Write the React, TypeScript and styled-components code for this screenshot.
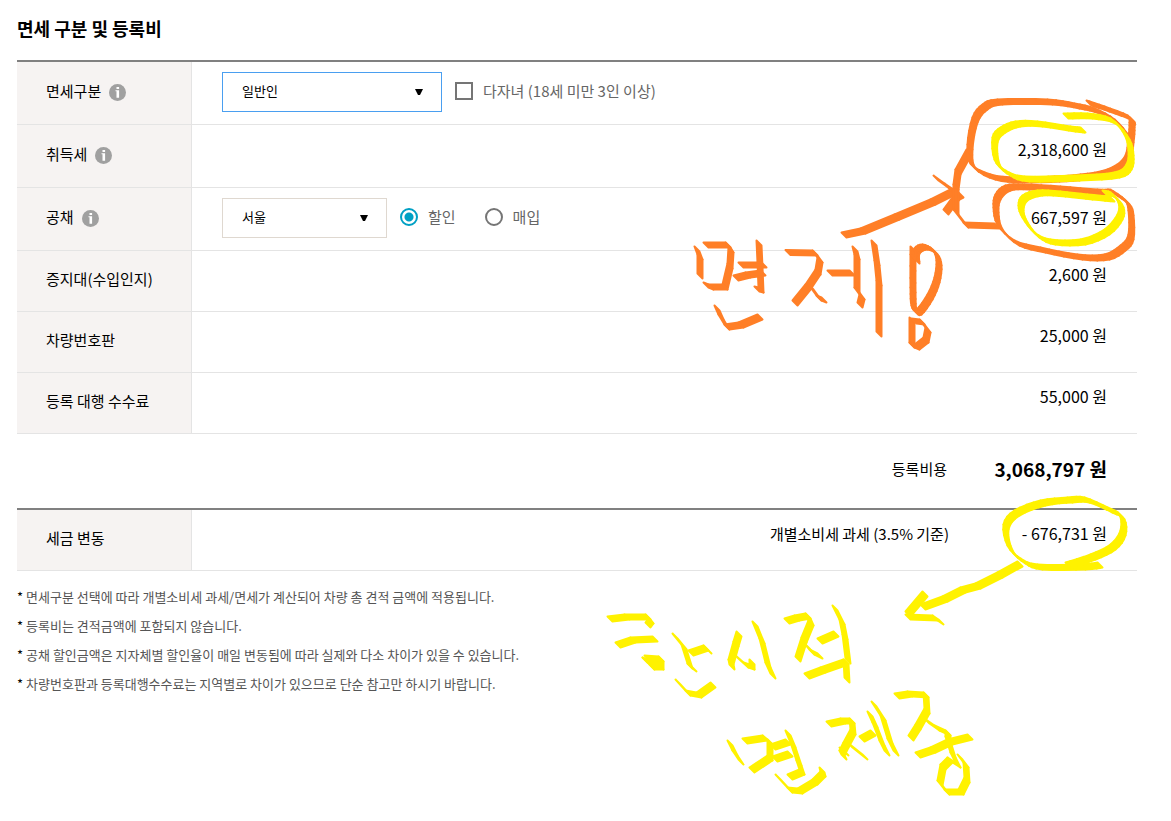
import React from 'react';
import styled, { createGlobalStyle } from 'styled-components';

const GlobalStyle = createGlobalStyle`
  *, *::before, *::after { box-sizing: border-box; }
  body {
    margin: 0;
    background: #fff;
    color: #000;
    font-family: 'Noto Sans CJK KR', 'Noto Sans', sans-serif;
    font-size: 15px;
    line-height: 24px;
  }
`;

const Page = styled.main`
  position: relative;
  min-height: 820px;
  padding: 16px 34px 16px 17px;
`;

const Title = styled.h1`
  margin: 0 0 20px;
  font-size: 18px;
  line-height: 24px;
  font-weight: 700;
`;

const Table = styled.table`
  width: 100%;
  border-spacing: 0;
  border-top: 2px solid #808080;
`;

const HeadCell = styled.th`
  width: 175px;
  padding: 0 0 4px 29px;
  background: #f6f3f2;
  border-right: 1px solid #e4e4e4;
  border-bottom: 1px solid #e4e4e4;
  font-weight: 400;
  text-align: left;
  white-space: nowrap;
`;

const Cell = styled.td<{ $height: number; $raised?: boolean }>`
  height: ${(p) => p.$height}px;
  padding: 0 30px ${(p) => (p.$raised ? 12 : 2)}px;
  border-bottom: 1px solid #e4e4e4;
`;

const HeadLabel = styled.span`
  display: flex;
  align-items: center;
  gap: 8px;
`;

const InfoButton = styled.button`
  display: flex;
  padding: 2px 0 0;
  border: 0;
  background: none;
  cursor: pointer;
`;

const Controls = styled.div`
  display: flex;
  align-items: center;
`;

const SelectBox = styled.span<{ $width: number }>`
  position: relative;
  width: ${(p) => p.$width}px;
  margin-right: 13px;
`;

const Select = styled.select<{ $active?: boolean }>`
  display: block;
  width: 100%;
  height: 40px;
  padding: 0 30px 2px 19px;
  border: 1px solid ${(p) => (p.$active ? '#4a9ff0' : '#dfd8d0')};
  border-radius: 0;
  background: #fff;
  color: #000;
  font: inherit;
  font-size: 13px;
  appearance: none;
  outline: none;
`;

const Arrow = styled.svg`
  position: absolute;
  top: 17px;
  right: 19px;
  pointer-events: none;
`;

const Choice = styled.label`
  display: flex;
  align-items: center;
  gap: 10px;
  margin-right: 29px;
  padding-bottom: 2px;
  color: #666;
`;

const Check = styled.input`
  width: 18px;
  height: 18px;
  margin: 0;
  border: 2px solid #757575;
  background: #fff;
  appearance: none;
`;

const Radio = styled(Check)`
  border-radius: 50%;
  &:checked {
    border-color: #00a0c4;
    background: radial-gradient(circle, #00a0c4 4px, #fff 5px);
  }
`;

const Amount = styled.span`
  min-width: 158px;
  margin-left: auto;
  padding-bottom: 2px;
  font-size: 16px;
  text-align: right;
`;

const AmountLine = styled.div`
  display: flex;
  align-items: center;
  justify-content: flex-end;
`;

const SideAmount = styled(Amount)`
  margin-left: 0;
`;

const Summary = styled(AmountLine)`
  height: 74px;
  padding: 0 30px 4px;
`;

const Total = styled.strong`
  min-width: 160px;
  font-size: 19px;
  font-weight: 700;
  text-align: right;
`;

const Notes = styled.ul`
  margin: 11px 0 0;
  padding: 0;
  list-style: none;
`;

const Note = styled.li`
  display: flex;
  gap: 3px;
  color: #555;
  font-size: 13px;
  line-height: 29px;

  &::before {
    content: '*';
    color: #000;
  }
`;

const Ink = styled.svg`
  position: absolute;
  top: 0;
  left: 0;
  pointer-events: none;
`;

const Info = ({ about }: { about: string }) => (
  <InfoButton type="button" aria-label={`${about} 안내`}>
    <svg width="17" height="17" viewBox="0 0 17 17" aria-hidden="true">
      <circle cx="8.5" cy="8.5" r="8.5" fill="#a0a0a0" />
      <rect x="7.5" y="3" width="2.6" height="2" fill="#fff" />
      <path d="M6.5 6.2h3.6v7.6H7.5V7.2h-1z" fill="#fff" />
    </svg>
  </InfoButton>
);

const DropDown = ({ label, value, width, active }: { label: string; value: string; width: number; active?: boolean }) => (
  <SelectBox $width={width}>
    <Select aria-label={label} $active={active} defaultValue={value}>
      <option>{value}</option>
    </Select>
    <Arrow width="8" height="6" viewBox="0 0 8 6" aria-hidden="true">
      <path d="M0 0h8L5 6H3z" />
    </Arrow>
  </SelectBox>
);

type Row = { name: string; info?: boolean; height: number; amount: string };
const fees: Row[] = [
  { name: '증지대(수입인지)', height: 61, amount: '2,600 원' },
  { name: '차량번호판', height: 61, amount: '25,000 원' },
  { name: '등록 대행 수수료', height: 61, amount: '55,000 원' },
];

const FeeRow = ({ name, info, height, amount }: Row) => (
  <tr>
    <HeadCell scope="row">
      <HeadLabel>
        {name}
        {info && <Info about={name} />}
      </HeadLabel>
    </HeadCell>
    <Cell $height={height} $raised>
      <AmountLine>
        <Amount>{amount}</Amount>
      </AmountLine>
    </Cell>
  </tr>
);

const notes = [
  '면세구분 선택에 따라 개별소비세 과세/면세가 계산되어 차량 총 견적 금액에 적용됩니다.',
  '등록비는 견적금액에 포함되지 않습니다.',
  '공채 할인금액은 지자체별 할인율이 매일 변동됨에 따라 실제와 다소 차이가 있을 수 있습니다.',
  '차량번호판과 등록대행수수료는 지역별로 차이가 있으므로 단순 참고만 하시기 바랍니다.',
];

// Freehand marks: each string is the centre line of one pen stroke.
const orangeMarks = [
  '697,249 700,257 700,276',
  '706,245 728,245 731,250 730,266 725,287 711,287 706,285',
  '759,243 760,265 761,290 757,289',
  '741,265 764,265',
  '736,278 748,275 763,273',
  '717,308 721,317 727,327 741,325 760,317',
  '788,252.5 815,253 820,260 818,272 808,287 795,303',
  '811,287 819,298 824,300',
  '830,273 852,273',
  '855,249 857,257 857,290 862,297 860,305',
  '874,243 877,263 879,283 879,334',
  '917,261 917,251 925,247 935,252 939,263 937,280 930,297 919,312 914,308 913,290 913,249',
  '912,320 912,345 917,347 926,340 928,330 922,322 914,321',
  '844,235 863,231 897,217 933,202 953,192',
  '936,178 947,186 956,192',
  '946,212 957,197 961,195',
  '969,152 958,172 956,187 956,212 966,225 997,226',
  '1089,103 1107,109 1130,118 1132,125 1131,140 1127,160 1110,172 1083,177 1057,179 1020,180 993,177 973,166 970,147 975,120 985,107 1000,102 1050,102 1077,106 1097,111 1117,122 1129,138',
  '1113,192 1127,202 1131,213 1131,237 1123,248 1107,257 1080,257 1043,250 1017,243 1000,227 996,210 998,197 1008,188 1027,187 1063,189 1100,192 1112,192',
];
const yellowMarks = [
  '1066,116 1090,116 1113,121 1127,137 1131,153 1129,167 1117,175 1077,178 1027,179 1008,173 997,162 995,140 1003,130 1018,124 1040,124 1073,129 1083,130',
  '1112,199 1090,197 1063,194 1040,193 1025,198 1021,208 1025,220 1037,235 1053,242 1083,242 1107,232 1120,217 1121,205 1113,195 1105,193',
  '1100,565 1083,567 1040,567 1023,561 1010,548 1006,527 1017,513 1043,503 1070,500 1087,500 1110,510 1122,517 1123,533 1113,547 1093,557 1068,565',
  '1020,564 1000,575 978,586 963,590 945,599 923,607',
  '925,594 908,614',
  '908,617 935,618 941,622',
  '610,619 627,617 648,617 651,621 648,625',
  '618,645 633,640 655,639',
  '647,658 661,659 661,667 652,667 645,660 652,663 660,663',
  '675,636 684,647 690,666 694,669',
  '691,653 706,648 709,651',
  '678,682 688,693 699,695 713,685',
  '739,634 736,644 731,662 732,667',
  '737,657 746,665 752,667 752,662',
  '755,624 762,641 768,665 773,676',
  '787,621 797,618 808,616 811,623 804,640 798,659',
  '807,646 812,652 820,656',
  '820,641 836,634',
  '835,608 842,622 845,637 848,661',
  '807,676 823,670 846,662 847,680',
  '730,743 735,753 741,762',
  '745,741 765,738 770,742 770,758 752,770',
  '773,747 788,742',
  '775,759 790,754',
  '788,733 793,745 799,763 802,772 790,777',
  '778,777 790,790 800,791 815,782 823,774 822,770',
  '829,724 843,721 852,721 853,732 846,745 842,753 844,757',
  '842,750 846,753',
  '850,745 865,757',
  '862,739 873,733',
  '870,714 875,725 882,743 887,753',
  '874,704 883,718 890,741 896,753',
  '897,696 910,694 926,695 927,711 918,727 911,738',
  '927,721 937,728 948,733 948,739 953,755 958,765',
  '918,755 933,750 950,742 970,737',
  '958,765 950,760 943,767 940,783 947,792 961,792 967,780 966,765 960,757',
];

type Point = [number, number];

// Long loops are rounded with a Catmull-Rom curve; short strokes keep their corners.
const trace = (line: string): Point[] => {
  const pts = line.split(' ').map((p) => p.split(',').map(Number) as Point);
  if (pts.length < 11) return pts;
  const out: Point[] = [pts[0]];
  for (let i = 0; i < pts.length - 1; i++) {
    const a = pts[Math.max(i - 1, 0)];
    const b = pts[i];
    const c = pts[i + 1];
    const d = pts[Math.min(i + 2, pts.length - 1)];
    for (let s = 1; s <= 4; s++) {
      const t = s / 4;
      const at = (k: 0 | 1) =>
        (2 * b[k] + (c[k] - a[k]) * t + (2 * a[k] - 5 * b[k] + 4 * c[k] - d[k]) * t * t + (3 * b[k] - a[k] - 3 * c[k] + d[k]) * t * t * t) / 2;
      out.push([at(0), at(1)]);
    }
  }
  return out;
};

// Sweeps a slanted chisel nib along the line, so diagonal strokes vary in weight.
const NIB = 2.5;
const sweep = (line: string) => {
  const pts = trace(line);
  return pts.slice(1).map(([x, y], i) => {
    const [px, py] = pts[i];
    return `M${px - NIB} ${py - NIB}L${px + NIB} ${py + NIB}L${x + NIB} ${y + NIB}L${x - NIB} ${y - NIB}Z`;
  });
};

const Pen = ({ color, marks }: { color: string; marks: string[] }) => (
  <g fill={color} stroke={color} strokeWidth="2" strokeLinejoin="round">
    {marks.flatMap((m) => sweep(m).map((d, i) => <path key={`${m}-${i}`} d={d} />))}
  </g>
);

export default function App() {
  return (
    <>
      <GlobalStyle />
      <Page>
        <Title>면세 구분 및 등록비</Title>
        <Table>
          <tbody>
            <tr>
              <HeadCell scope="row">
                <HeadLabel>
                  면세구분
                  <Info about="면세구분" />
                </HeadLabel>
              </HeadCell>
              <Cell $height={63}>
                <Controls>
                  <DropDown label="면세구분" value="일반인" width={220} active />
                  <Choice>
                    <Check type="checkbox" />
                    다자녀 (18세 미만 3인 이상)
                  </Choice>
                </Controls>
              </Cell>
            </tr>
            <FeeRow name="취득세" info height={63} amount="2,318,600 원" />
            <tr>
              <HeadCell scope="row">
                <HeadLabel>
                  공채
                  <Info about="공채" />
                </HeadLabel>
              </HeadCell>
              <Cell $height={63}>
                <Controls>
                  <DropDown label="공채 지역" value="서울" width={165} />
                  <Choice>
                    <Radio type="radio" name="bond" defaultChecked />
                    할인
                  </Choice>
                  <Choice>
                    <Radio type="radio" name="bond" />
                    매입
                  </Choice>
                  <Amount>667,597 원</Amount>
                </Controls>
              </Cell>
            </tr>
            {fees.map((f) => (
              <FeeRow key={f.name} {...f} />
            ))}
          </tbody>
        </Table>
        <Summary>
          <span>등록비용</span>
          <Total>3,068,797 원</Total>
        </Summary>
        <Table>
          <tbody>
            <tr>
              <HeadCell scope="row">세금 변동</HeadCell>
              <Cell $height={61} $raised>
                <AmountLine>
                  <span>개별소비세 과세 (3.5% 기준)</span>
                  <SideAmount>- 676,731 원</SideAmount>
                </AmountLine>
              </Cell>
            </tr>
          </tbody>
        </Table>
        <Notes>
          {notes.map((n) => (
            <Note key={n}>{n}</Note>
          ))}
        </Notes>
        <Ink width="1171" height="820" viewBox="0 0 1171 820" aria-hidden="true">
          <Pen color="#ff7f27" marks={orangeMarks} />
          <Pen color="#fff200" marks={yellowMarks} />
        </Ink>
      </Page>
    </>
  );
}
